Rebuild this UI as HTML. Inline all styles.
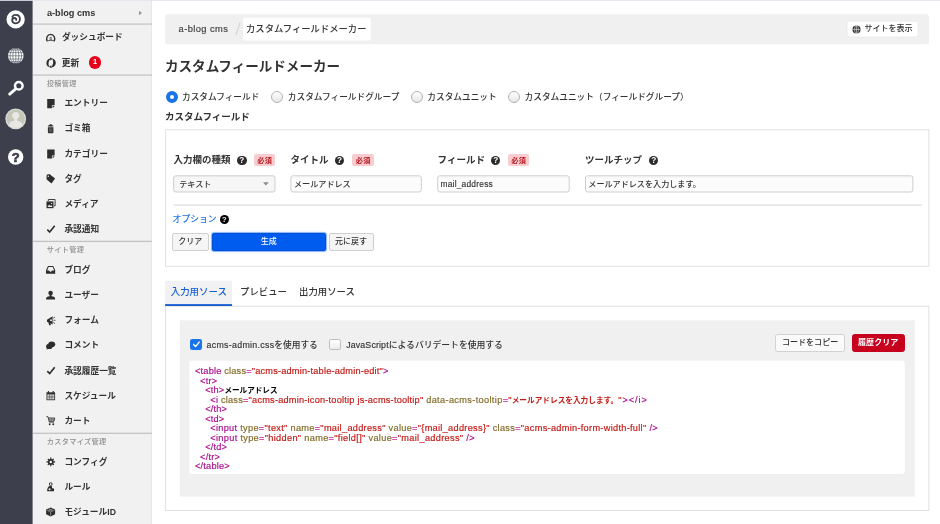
<!DOCTYPE html>
<html lang="ja">
<head>
<meta charset="utf-8">
<title>カスタムフィールドメーカー</title>
<style>
*{box-sizing:border-box;margin:0;padding:0}
html,body{width:940px;height:524px;overflow:hidden;background:#fff}
body{will-change:transform}
body{position:relative;font-family:"Liberation Sans","Noto Sans CJK JP",sans-serif;color:#333;font-size:8.8px;line-height:1;font-weight:500}
.abs{position:absolute}
.t{position:absolute;white-space:nowrap;line-height:12px;height:12px;margin-top:-6px}
.b{font-weight:bold}
/* dark bar */
#dark{left:0;top:0;width:32px;height:524px;background:#3d3f4d}
/* light sidebar */
#side{left:32.4px;top:0;width:119.6px;height:524px;background:#f1f1f1;border-right:1px solid #e7e7e7}
.sd{position:absolute;left:0;width:120px;height:1px;background:#c6c6c6}
.si{position:absolute;left:32px;font-weight:bold;font-size:8.7px;color:#333;white-space:nowrap;line-height:12px;height:12px;margin-top:-5.5px}
.sl{position:absolute;left:14.3px;margin-top:-4.4px;font-size:7.2px;letter-spacing:.3px;color:#8f8f8f;white-space:nowrap;line-height:10px;height:10px}
.ic{position:absolute;left:14px;width:9px;height:9px;margin-top:-4.5px}
/* main */
#topline{left:0;top:0;width:940px;height:1px;background:rgba(228,228,238,.85)}
#bc{left:165px;top:14px;width:764px;height:29.7px;background:#f0f0f0;border-radius:2px}
#bcact{left:243px;top:18px;width:128px;height:22.5px;background:#fff;border-radius:2px}
.panel{position:absolute;border:1px solid #e1e1e1;background:#fff}
.inp{position:absolute;top:175.3px;height:17.2px;border:1px solid #cdcdcd;border-radius:2.5px;background:#fcfcfc;box-shadow:inset 0 1px 1px rgba(0,0,0,.06)}
.req{position:absolute;top:154.1px;height:12.4px;width:21.4px;margin-left:.3px;background:#f9cdcf;border-radius:2px;color:#b5121b;font-weight:bold;font-size:7.2px;letter-spacing:.3px;text-indent:.3px;line-height:13.4px;text-align:center}
.hq{position:absolute;width:9.6px;height:9.6px;margin:-.5px;border-radius:50%;background:#2c2c2c;color:#fff;font-weight:bold;font-size:8.2px;line-height:9.9px;text-align:center;font-family:"Liberation Sans",sans-serif}
.btn{position:absolute;top:233px;height:17.5px;border:1px solid #d0d0d0;border-radius:2px;background:#f5f5f5;color:#333;font-size:8px;line-height:15.5px;text-align:center;white-space:nowrap}
.radio{position:absolute;top:90.55px;width:12.1px;height:12.1px;border-radius:50%;border:1px solid #b4b4b4;background:linear-gradient(#fff,#e6e6e6)}
.rl{font-size:8.68px}
.code{position:absolute;left:195px;white-space:pre;font-size:9.2px;letter-spacing:.2px;line-height:10px;height:10px;margin-top:-5px;color:#000;font-family:"Liberation Sans","Noto Sans CJK JP",sans-serif}
.code{-webkit-text-stroke:.18px}
.code .jp{-webkit-text-stroke:0;font-size:7.6px;font-weight:700;letter-spacing:0}
.tg{color:#aa0d91}.eq{color:#c4269a}.at{color:#836c28}.st{color:#c41a16}
</style>
</head>
<body>
<!-- DARK BAR -->
<div id="dark" class="abs">
<svg class="abs" style="left:0;top:0" width="33" height="180" viewBox="0 0 33 180">
  <circle cx="15.650" cy="19.400" r="9.150" fill="#fff"/>
  <path d="M12.400 16.600C13.100 15.400 14.300 14.900 15.700 14.900C18.200 14.900 19.900 16.700 19.900 19.100C19.900 21.500 18.200 23.300 15.800 23.300C13.700 23.300 12.200 22 12.200 20.400C12.200 18.900 13.300 18 14.500 18C15.700 18 16.500 18.800 16.200 19.900" fill="none" stroke="#3d3f4d" stroke-width="1.850" stroke-linecap="round"/>
  <circle cx="15.800" cy="55.800" r="7.800" fill="#fff"/>
  <g stroke="#3d3f4d" stroke-width=".55" fill="none">
    <ellipse cx="15.800" cy="55.800" rx="3" ry="7.800"/><line x1="15.800" y1="48" x2="15.800" y2="63.600"/>
    <line x1="8" y1="55.800" x2="23.600" y2="55.800"/><line x1="8.600" y1="52.600" x2="23" y2="52.600"/><line x1="8.600" y1="59" x2="23" y2="59"/>
    <line x1="10.300" y1="50" x2="21.300" y2="50"/><line x1="10.300" y1="61.600" x2="21.300" y2="61.600"/>
    <ellipse cx="15.800" cy="55.800" rx="5.800" ry="7.800"/>
  </g>
  <circle cx="18.800" cy="85.800" r="3.800" fill="none" stroke="#fff" stroke-width="2.500"/>
  <line x1="15.500" y1="89.100" x2="9.700" y2="94.100" stroke="#fff" stroke-width="2.900" stroke-linecap="round"/>
  <circle cx="15.700" cy="118.800" r="10.400" fill="#dcdcd5"/>
  <circle cx="15.700" cy="118.800" r="9.200" fill="#c6c6bb"/>
  <circle cx="15.700" cy="115.600" r="3.500" fill="#e9e9e4"/><path d="M14.300 118h2.800v3h-2.800z" fill="#e9e9e4"/>
  <path d="M9 125.200c.4-3 2.700-4.300 6.700-4.600c4 .3 6.300 1.600 6.700 4.600a9.200 9.200 0 0 1-13.400 0z" fill="#e9e9e4"/>
  <circle cx="15.700" cy="157" r="7.700" fill="#fff"/>
  <text x="15.700" y="161.700" font-family="Liberation Sans" font-weight="bold" font-size="13" fill="#3d3f4d" stroke="#3d3f4d" stroke-width=".7" text-anchor="middle">?</text>
</svg>
</div>

<!-- LIGHT SIDEBAR -->
<div id="side" class="abs">
  <div class="si" style="left:14.500px;top:12.4px;font-size:9.2px">a-blog cms</div>
  <svg class="abs" style="left:106px;top:10px" width="5" height="6"><path d="M1 0.800L4 3L1 5.200z" fill="#999"/></svg>
  <div class="si" style="left:29.500px;top:36.900px">ダッシュボード</div>
  <div class="si" style="left:29.300px;top:62.5px">更新</div>
  <div class="abs" style="left:56.600px;top:56.300px;width:12.4px;height:12.4px;border-radius:50%;background:#e3001b;color:#fff;font-weight:bold;font-size:7.5px;line-height:12.4px;text-align:center">1</div>
  <div class="sl" style="top:83px">投稿管理</div>
  <div class="si" style="top:102.5px">エントリー</div>
  <div class="si" style="top:127.8px">ゴミ箱</div>
  <div class="si" style="top:153px">カテゴリー</div>
  <div class="si" style="top:178px">タグ</div>
  <div class="si" style="top:203.500px">メディア</div>
  <div class="si" style="top:228.800px">承認通知</div>
  <div class="sl" style="top:249.800px">サイト管理</div>
  <div class="si" style="top:269px">ブログ</div>
  <div class="si" style="top:294.500px">ユーザー</div>
  <div class="si" style="top:319.500px">フォーム</div>
  <div class="si" style="top:344.500px">コメント</div>
  <div class="si" style="top:370px">承認履歴一覧</div>
  <div class="si" style="top:395px">スケジュール</div>
  <div class="si" style="top:420px">カート</div>
  <div class="sl" style="top:441px">カスタマイズ管理</div>
  <div class="si" style="top:461px">コンフィグ</div>
  <div class="si" style="top:486px">ルール</div>
  <div class="si" style="top:511px">モジュールID</div>
</div>

<svg class="abs" style="left:0;top:0" width="152" height="524" viewBox="0 0 152 524" fill="#2d2d2d">
  <rect x="33" y="23.45" width="118.900" height="1.300" fill="#c3c3c3"/>
  <rect x="33" y="74.45" width="118.900" height="1.300" fill="#c3c3c3"/>
  <rect x="33" y="240.75" width="118.900" height="1.300" fill="#c3c3c3"/>
  <rect x="33" y="432.65" width="118.900" height="1.300" fill="#c3c3c3"/>
  <!-- dashboard -->
  <path d="M47.100 41C46 38 47.300 34.400 50.700 34.400C54.100 34.400 55.400 38 54.300 41" fill="none" stroke="#2d2d2d" stroke-width="1.350"/>
  <path d="M46.600 41.100Q50.700 39.300 54.800 41.100" fill="none" stroke="#2d2d2d" stroke-width=".8"/>
  <path d="M50 37.300h1.400v2.600h-1.400z" fill="none" stroke="#2d2d2d" stroke-width=".55"/>
  <!-- refresh -->
  <path d="M51 58.400A4.500 4.500 0 0 0 49.600 67.200A6.500 6.500 0 0 1 51 58.400zM50.600 67.300A4.500 4.500 0 0 0 52 58.400A6.500 6.500 0 0 1 50.600 67.300z"/>
  <path d="M50 57.600l2.600 1.100-2.200 1.700zM51.600 68l-2.600-1.100 2.200-1.700z"/>
  <!-- entry -->
  <path id="doc" d="M47.200 99.100h7.400v6.200h-2.700v2.900h-4.700zM52.600 106v2.200l2-2.200z"/>
  <!-- trash -->
  <path d="M49.700 124.200h2.100v.8h-2.100zM47.800 126.600q0-1.700 1.700-1.700h2.300q1.700 0 1.700 1.700zM47.900 127.300h5.500v4.900q0 1-1 1h-3.500q-1 0-1-1z"/>
  <path d="M49.400 128.300v3.900M50.650 128.300v3.900M51.900 128.300v3.900" stroke="#8d8d8d" stroke-width=".5" fill="none"/>
  <!-- category -->
  <path d="M47.200 149.400h7.400v6.200h-2.700v2.900h-4.700zM52.600 156.300v2.200l2-2.200z"/>
  <!-- tag -->
  <path d="M46.500 177.400l.2-2.600 2.700-.8 5.700 4.600-3.600 4.900-4.800-3.900z"/>
  <circle cx="48.300" cy="176.200" r=".7" fill="#f1f1f1"/>
  <!-- media -->
  <path d="M48.300 201v-1.500h6.800v6.400h-1.300" fill="none" stroke="#2d2d2d" stroke-width=".9"/>
  <path d="M46.500 201.400h7v6.800h-7z"/>
  <path d="M47.400 206.900l1.700-2.300 1.200 1.300.9-.8 1.400 1.800z" fill="#e8e8e8"/><circle cx="51.600" cy="203.400" r=".6" fill="#e8e8e8"/>
  <!-- check -->
  <path d="M47.300 229.600l2.400 2.500 5-6.300" fill="none" stroke="#2d2d2d" stroke-width="1.600"/>
  <!-- blog -->
  <path d="M48 266h5.300l1.900 4.300v3.400h-9.200v-3.400zM48.600 267l-1.500 3.400h2.100q.3 1.300 1.400 1.300t1.400-1.300h2.200l-1.500-3.400z" fill-rule="evenodd"/>
  <!-- user -->
  <circle cx="50.600" cy="293" r="2.300"/><path d="M49.600 294.500h2v1.800q3.500.6 3.500 2.200v1.100h-9v-1.100q0-1.600 3.500-2.200z"/>
  <!-- form -->
  <path d="M47 319.800l5.600-3.600v8.200l-2.200-1.200.6 2h-1.800l-.8-2.800-1.400-.7z"/>
  <path d="M53.300 318.200l1.700-1.200M53.500 320.300h2M53.300 322.400l1.700 1.200" stroke="#2d2d2d" stroke-width=".8" fill="none"/>
  <circle cx="51" cy="320.300" r="1" fill="#f1f1f1"/>
  <!-- comment -->
  <ellipse cx="51.700" cy="344.300" rx="3.500" ry="2.900"/><ellipse cx="49.300" cy="346.400" rx="3.200" ry="2.700"/><path d="M46.300 349.400l1.300-2.200 1.500 1.500z"/>
  <!-- check2 -->
  <path d="M47.300 371.100l2.400 2.500 5-6.300" fill="none" stroke="#2d2d2d" stroke-width="1.600"/>
  <!-- schedule -->
  <path d="M46.500 392.300h8.600v7.900h-8.600z"/><path d="M47.300 394.400h7v5h-7z" fill="#d4d4d4"/>
  <path d="M49.650 394.600v4.700M51.950 394.600v4.700M47.400 396.950h6.800" stroke="#2d2d2d" stroke-width=".55" fill="none"/>
  <path d="M48.400 391.100v2M53.200 391.100v2" stroke="#2d2d2d" stroke-width="1.100"/>
  <!-- cart -->
  <path d="M46.400 416.700h1.600l1.300 5.400h4.700M48.300 418h6.500l-.8 3.200h-4.900" fill="none" stroke="#2d2d2d" stroke-width=".85"/>
  <path d="M50 418v3.200M51.600 418v3.200M53.200 418v3.200M48.600 419.600h5.800" stroke="#2d2d2d" stroke-width=".45" fill="none"/>
  <circle cx="49.700" cy="424.300" r=".95"/><circle cx="53.300" cy="424.300" r=".95"/>
  <!-- config -->
  <circle cx="50.800" cy="461.900" r="2.900"/>
  <path d="M50.800 457.600v8.600M46.500 461.900h8.600M47.800 458.900l6 6M53.800 458.900l-6 6" stroke="#2d2d2d" stroke-width="1.200"/>
  <circle cx="50.800" cy="461.900" r="1.250" fill="#f1f1f1"/>
  <!-- rule -->
  <circle cx="50.700" cy="484.100" r="1.400" fill="none" stroke="#2d2d2d" stroke-width=".95"/>
  <path d="M47.200 491.300q-.3-4 2.300-5.300h2.300l.3 2.200h1.400q1.300 1.600.3 3.100z"/>
  <circle cx="49.600" cy="489.300" r="1.050" fill="#f1f1f1"/>
  <!-- module -->
  <path d="M50.600 507.400l4.500 2.200v4.600l-4.500 2.200-4.500-2.200v-4.600z"/>
  <path d="M46.600 510l4 1.900 4-1.900M50.600 511.900v4M48.400 508.700l4.300 2.100M52.800 508.700l-4.300 2.100" stroke="#c4c4c4" stroke-width=".55" fill="none"/>
</svg>

<div class="abs" style="left:32px;top:0;width:1px;height:524px;background:#85868e"></div>
<!-- MAIN -->
<div id="topline" class="abs"></div>
<svg class="abs" style="left:0;top:0" width="940" height="524" viewBox="0 0 940 524">
  <rect x="165.100" y="14.200" width="763.900" height="30" rx="2.500" fill="#f0f0f0"/>
  <rect x="243" y="17.800" width="127.800" height="22.800" rx="2" fill="#fff"/>
  <rect x="847" y="21.100" width="71.200" height="15.900" rx="2.300" fill="#fff" stroke="#e6e6e6" stroke-width=".8"/>
  <rect x="165.500" y="129.700" width="763.300" height="136.650" fill="#fff" stroke="#e2e2e2" stroke-width="1"/>
  <g stroke="#cecece" stroke-width="1">
    <rect x="173.600" y="175.800" width="101.400" height="16.200" rx="2.200" fill="#f6f6f6"/>
    <rect x="290.900" y="175.800" width="130.400" height="16.200" rx="2.200" fill="#fcfcfc"/>
    <rect x="437.700" y="175.800" width="131.500" height="16.200" rx="2.200" fill="#fcfcfc"/>
    <rect x="585.500" y="175.800" width="327.400" height="16.200" rx="2.200" fill="#fcfcfc"/>
  </g>
  <g stroke="#ececec" stroke-width=".8"><path d="M292 176.900h128.200M438.800 176.900h129.300M586.600 176.900h325.200"/></g>
  <rect x="173.400" y="204.400" width="748.600" height="1.500" fill="#e5e5e5"/>
  <rect x="165.500" y="306.200" width="763.300" height="204.300" fill="#fff" stroke="#e2e2e2" stroke-width="1"/>
  <rect x="165.100" y="280.800" width="67" height="24" fill="#f1f1f4"/>
  <rect x="165.100" y="304.100" width="67" height="1.900" fill="#1a5fd0"/>
  <rect x="179.800" y="320.300" width="735" height="176.300" fill="#f0f0f0"/>
  <rect x="189.400" y="360.800" width="715.400" height="113.300" rx="3" fill="#fff"/>
</svg>
<div class="t" style="left:178.600px;top:29.400px;font-size:9.3px;letter-spacing:.42px;color:#3c3c3c;-webkit-text-stroke:.15px">a-blog cms</div>
<svg class="abs" style="left:233.600px;top:21px" width="8" height="16"><line x1="6" y1="1.500" x2="2" y2="14" stroke="#c8c8c8" stroke-width=".8"/></svg>
<div class="t" style="left:246px;top:28.900px;font-size:9.33px;color:#333">カスタムフィールドメーカー</div>
<svg class="abs" style="left:851.900px;top:24.600px" width="9" height="9" viewBox="0 0 8 8"><circle cx="4" cy="4" r="3.600" fill="#333"/><g stroke="#fff" stroke-width=".45" fill="none"><ellipse cx="4" cy="4" rx="1.700" ry="3.600"/><line x1=".4" y1="4" x2="7.600" y2="4"/><line x1="4" y1=".4" x2="4" y2="7.600"/></g></svg>
<div class="t" style="left:864.400px;top:29.100px;font-size:8.050px;color:#333">サイトを表示</div>

<div class="t b" style="left:165px;top:66.900px;font-size:13.55px;line-height:18px;height:18px;margin-top:-9px;color:#333">カスタムフィールドメーカー</div>

<!-- radios -->
<div class="radio" style="left:166.400px;border:4.100px solid #1a73e8;background:#fff"></div>
<div class="t rl" style="left:182px;top:96.600px">カスタムフィールド</div>
<div class="radio" style="left:270.900px"></div>
<div class="t rl" style="left:287.800px;top:96.600px">カスタムフィールドグループ</div>
<div class="radio" style="left:411.400px"></div>
<div class="t rl" style="left:427.300px;top:96.600px">カスタムユニット</div>
<div class="radio" style="left:507.900px"></div>
<div class="t rl" style="left:524.600px;top:96.600px">カスタムユニット（フィールドグループ）</div>

<div class="t b" style="left:165px;top:117px;font-size:9.5px">カスタムフィールド</div>

<!-- PANEL 1 -->
<div class="t b" style="left:173.6px;top:160.2px;font-size:9.5px">入力欄の種類</div>
<div class="hq" style="left:237.500px;top:156px">?</div>
<div class="req" style="left:253.700px">必須</div>
<div class="t b" style="left:290.6px;top:160.2px;font-size:9.5px">タイトル</div>
<div class="hq" style="left:335.100px;top:156px">?</div>
<div class="req" style="left:352px">必須</div>
<div class="t b" style="left:437.6px;top:160.2px;font-size:9.5px">フィールド</div>
<div class="hq" style="left:491.400px;top:156px">?</div>
<div class="req" style="left:507.700px">必須</div>
<div class="t b" style="left:585.0px;top:160.2px;font-size:9.5px">ツールチップ</div>
<div class="hq" style="left:649.400px;top:156px">?</div>

<div class="t" style="left:179.200px;top:184.800px;font-size:8.100px">テキスト</div>
<svg class="abs" style="left:262.600px;top:182.200px" width="6" height="4"><path d="M0 .2h5.800l-2.900 3.300z" fill="#8a8a8a"/></svg>
<div class="t" style="left:294px;top:184.800px;font-size:8.100px">メールアドレス</div>
<div class="t" style="left:440.500px;top:184px;font-size:8.4px;letter-spacing:.22px;-webkit-text-stroke:.15px">mail_address</div>
<div class="t" style="left:588.300px;top:184.800px;font-size:8.100px">メールアドレスを入力します。</div>

<div class="t" style="left:172.600px;top:218.600px;color:#2277e3">オプション</div>
<div class="hq" style="left:219.900px;top:215.600px;background:#000;width:9px;height:9px;margin:-.2px;font-size:7.6px;line-height:9.3px">?</div>

<div class="btn" style="left:172px;width:36.500px">クリア</div>
<div class="btn" style="left:212px;width:113.500px;background:#005bef;border-color:#0052d6;color:#fff;box-shadow:0 0 0 1px rgba(0,91,239,.3),0 0 2.500px rgba(0,91,239,.55)">生成</div>
<div class="btn" style="left:328.500px;width:45.200px">元に戻す</div>

<!-- TABS -->
<div class="t" style="left:170.700px;top:291.700px;font-size:9.45px;color:#1660d6;font-weight:500">入力用ソース</div>
<div class="t" style="left:240px;top:291.700px;font-size:9.4px">プレビュー</div>
<div class="t" style="left:299px;top:291.700px;font-size:9.4px">出力用ソース</div>

<!-- PANEL 2 -->
<div class="abs" style="left:190.100px;top:338.800px;width:12px;height:11.500px;border-radius:2.200px;background:#1b74ea"></div>
<svg class="abs" style="left:190.800px;top:339.300px" width="10.600" height="10.600" viewBox="0 0 10.600 10.600"><path d="M2.600 5.500l2 2.100 3.600-4.500" fill="none" stroke="#fff" stroke-width="1.400" stroke-linecap="round" stroke-linejoin="round"/></svg>
<div class="t" style="left:206.600px;top:344.600px;font-size:8.700px"><span style="font-size:8.800px;letter-spacing:.3px;-webkit-text-stroke:.15px">acms-admin.css</span>を使用する</div>
<div class="abs" style="left:329px;top:338.800px;width:12px;height:11.500px;border-radius:2.200px;background:linear-gradient(#fff,#ececec);border:1px solid #bdbdbd"></div>
<div class="t" style="left:346.200px;top:344.600px;font-size:8.700px"><span style="font-size:8.800px;letter-spacing:.15px;-webkit-text-stroke:.15px">JavaScript</span><span style="font-size:8.800px">によるバリデートを使用する</span></div>
<div class="btn" style="left:775.300px;top:333.800px;width:69.600px;height:17.800px;line-height:15.800px;background:#fafafa;border-color:#d2d2d2;border-radius:2.600px;font-size:8.050px">コードをコピー</div>
<div class="btn b" style="left:851.600px;top:333.800px;width:53.200px;height:17.800px;line-height:15.800px;background:#c7001e;border-color:#c7001e;border-radius:2.600px;color:#fff;font-size:8.050px">履歴クリア</div>

<div class="code" style="top:371.30px;padding-left:0.0px"><span class="tg">&lt;table</span> <span class="at">class</span><span class="eq">=</span><span class="st">"acms-admin-table-admin-edit"</span><span class="tg">&gt;</span></div>
<div class="code" style="top:380.77px;padding-left:5.1px"><span class="tg">&lt;tr&gt;</span></div>
<div class="code" style="top:390.24px;padding-left:10.2px"><span class="tg">&lt;th&gt;</span><span class="jp" style="color:#000">メールアドレス</span></div>
<div class="code" style="top:399.71px;padding-left:15.3px;letter-spacing:.22px"><span class="tg">&lt;i</span> <span class="at">class</span><span class="eq">=</span><span class="st">"acms-admin-icon-tooltip js-acms-tooltip"</span> <span class="at" style="letter-spacing:.35px">data-acms-tooltip</span><span class="eq">=</span><span class="st">"<span class="jp" style="font-size:7.66px">メールアドレスを入力します。</span><span style="letter-spacing:1.1px">"</span></span><span class="tg" style="letter-spacing:.9px">&gt;&lt;/i&gt;</span></div>
<div class="code" style="top:409.18px;padding-left:10.2px"><span class="tg">&lt;/th&gt;</span></div>
<div class="code" style="top:418.65px;padding-left:10.2px"><span class="tg">&lt;td&gt;</span></div>
<div class="code" style="top:428.12px;padding-left:15.3px;letter-spacing:.3px"><span class="tg">&lt;input</span> <span class="at">type</span><span class="eq">=</span><span class="st">"text"</span> <span class="at">name</span><span class="eq">=</span><span class="st">"mail_address"</span> <span class="at">value</span><span class="eq">=</span><span class="st">"{mail_address}"</span> <span class="at">class</span><span class="eq">=</span><span class="st">"acms-admin-form-width-full"</span> <span class="tg">/&gt;</span></div>
<div class="code" style="top:437.59px;padding-left:15.3px;letter-spacing:.32px"><span class="tg">&lt;input</span> <span class="at">type</span><span class="eq">=</span><span class="st">"hidden"</span> <span class="at">name</span><span class="eq">=</span><span class="st">"field[]"</span> <span class="at">value</span><span class="eq">=</span><span class="st">"mail_address"</span> <span class="tg">/&gt;</span></div>
<div class="code" style="top:447.06px;padding-left:10.2px"><span class="tg">&lt;/td&gt;</span></div>
<div class="code" style="top:456.53px;padding-left:5.1px"><span class="tg">&lt;/tr&gt;</span></div>
<div class="code" style="top:466.00px;padding-left:0.0px"><span class="tg">&lt;/table&gt;</span></div>
</body>
</html>
